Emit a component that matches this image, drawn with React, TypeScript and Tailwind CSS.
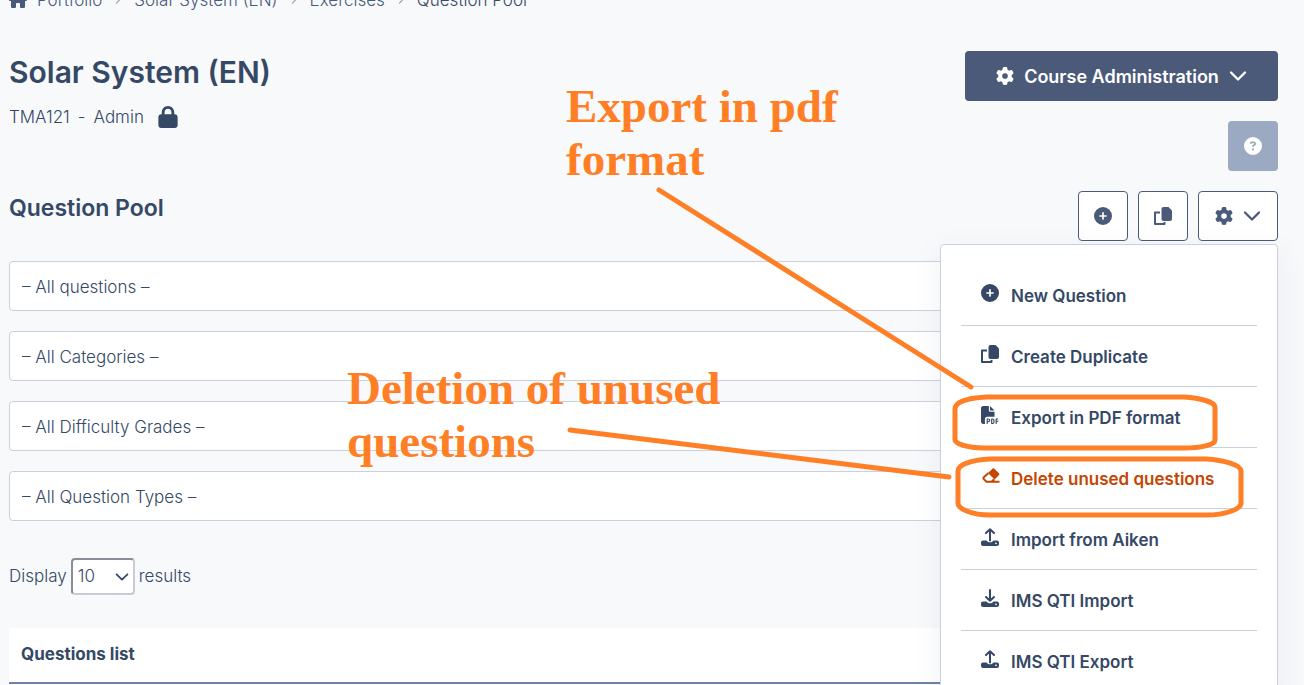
import type { ReactNode } from 'react';
import { FaCircleQuestion, FaCirclePlus, FaFilePdf, FaGear, FaHouse, FaLock } from 'react-icons/fa6';

type MenuItem = {
  label: string;
  icon: ReactNode;
  danger?: boolean;
};

function TrayIcon({ direction }: { direction: 'up' | 'down' }) {
  return (
    <svg viewBox="0 0 18 18" className="size-[18px]" fill="none" aria-hidden="true">
      <path
        fillRule="evenodd"
        fill="currentColor"
        d="M2 12.500H5.500C6.500 13.800 7.700 14.300 9 14.300S11.500 13.800 12.500 12.500H16C17.100 12.500 18 13.400 18 14.500V16C18 17.100 17.100 18 16 18H2C.9 18 0 17.100 0 16V14.500C0 13.400.9 12.500 2 12.500ZM15 14.400a.9.900 0 1 0 0 1.800a.9.900 0 0 0 0-1.800Z"
      />
      <path
        d={direction === 'up' ? 'M9 12.500V1.500M5 5L9 1.200L13 5' : 'M9 1V11.500M5 8L9 11.800L13 8'}
        stroke="currentColor"
        strokeWidth="2"
        strokeLinecap="round"
        strokeLinejoin="round"
      />
    </svg>
  );
}

function CopyIcon() {
  return (
    <svg viewBox="0 0 18 18" className="size-[18px]" fill="none" aria-hidden="true">
      <path d="M9.500 0H14.500L18 3.500V12C18 13.100 17.100 14 16 14H9.500C8.400 14 7.500 13.100 7.500 12V2C7.500.9 8.400 0 9.500 0Z" fill="currentColor" />
      <path d="M6 5.500H1V17H10.500V15" stroke="currentColor" strokeWidth="2" strokeLinejoin="round" />
    </svg>
  );
}

function EraserIcon() {
  return (
    <svg viewBox="0 0 18 18" className="ml-px size-[18px]" fill="none" aria-hidden="true">
      <path d="M6 6L10.500 1.700C11 1.200 11.900 1.200 12.400 1.700L17 6.300C17.500 6.800 17.500 7.600 17 8.100L12.600 12.600Z" fill="currentColor" />
      <path
        d="M6.500 6L1.800 10.300C1.300 10.800 1.300 11.600 1.800 12.100L4.500 14.800H17.500M12.200 12.200L9.500 14.800"
        stroke="currentColor"
        strokeWidth="2"
        strokeLinejoin="round"
      />
    </svg>
  );
}

function ChevronIcon({ className }: { className: string }) {
  return (
    <svg viewBox="0 0 18 18" className={className} fill="none" aria-hidden="true">
      <path d="M2 5.500L9 12.500L16 5.500" stroke="currentColor" strokeWidth="2.300" strokeLinecap="round" strokeLinejoin="round" />
    </svg>
  );
}

const crumbs = ['Portfolio', 'Solar System (EN)', 'Exercises', 'Question Pool'];

const filters = [
  { id: 'questions', label: '– All questions –' },
  { id: 'categories', label: '– All Categories –' },
  { id: 'grades', label: '– All Difficulty Grades –' },
  { id: 'types', label: '– All Question Types –' },
];

const menuItems: MenuItem[] = [
  { label: 'New Question', icon: <FaCirclePlus /> },
  { label: 'Create Duplicate', icon: <CopyIcon /> },
  { label: 'Export in PDF format', icon: <FaFilePdf /> },
  { label: 'Delete unused questions', icon: <EraserIcon />, danger: true },
  { label: 'Import from Aiken', icon: <TrayIcon direction="up" /> },
  { label: 'IMS QTI Import', icon: <TrayIcon direction="down" /> },
  { label: 'IMS QTI Export', icon: <TrayIcon direction="up" /> },
];

function Breadcrumbs() {
  return (
    <nav aria-label="Breadcrumb" className="-mt-3 h-6">
      <ol className="flex items-center leading-6 text-[#4a5a7a]">
        {crumbs.map((crumb, i) => (
          <li key={crumb} className="flex items-center">
            {i > 0 && <ChevronIcon className="mx-3 size-2 -rotate-90 text-[#8a94a8]" />}
            {i < crumbs.length - 1 ? (
              <a href="#" className="flex items-center gap-[10px]">
                {i === 0 && <FaHouse className="size-[18px]" />}
                {crumb}
              </a>
            ) : (
              <span className="text-[#354866]" aria-current="page">{crumb}</span>
            )}
          </li>
        ))}
      </ol>
    </nav>
  );
}

function ToolsMenu() {
  return (
    <ul className="absolute top-full right-0 z-10 mt-[3px] w-[338px] rounded border border-[#cbd1dc] bg-white px-5 pt-5 shadow-[0_8px_30px_rgba(50,70,110,0.08)]">
      {menuItems.map(item => (
        <li key={item.label} className="border-b border-[#cbd1dc]">
          <button
            type="button"
            className={`flex h-[60px] w-full items-center gap-3 px-5 pt-1 text-left text-[17px] font-semibold ${
              item.danger ? 'text-[#c44601]' : 'text-[#354866]'
            }`}
          >
            <span className="-mt-2 w-[18px] text-[18px]">{item.icon}</span>
            {item.label}
          </button>
        </li>
      ))}
    </ul>
  );
}

function Annotations() {
  return (
    <div className="pointer-events-none absolute inset-0 z-20 font-['Liberation_Serif',serif] text-[47px] leading-[53px] font-bold text-[#ff7f27]">
      <p className="absolute top-[80px] left-[566px]">
        Export in pdf
        <br />
        format
      </p>
      <p className="absolute top-[362px] left-[347px]">
        Deletion of unused
        <br />
        questions
      </p>
      <svg
        width="1304"
        height="685"
        viewBox="0 0 1304 685"
        fill="none"
        stroke="#ff7f27"
        strokeWidth="5"
        strokeLinecap="round"
        className="absolute top-0 left-0"
        aria-hidden="true"
      >
        <path d="M659 190L971 387" />
        <path d="M570 430L949 477" />
        <path d="M986 397H1184C1200 398 1215 402 1215 407V440C1215 445 1200 448 1184 448H984C966 448 955 443 955 440V409C955 402 968 398 986 397Z" />
        <path d="M990 459H1206C1224 460 1241 465 1241 471V503C1241 509 1226 515 1206 515H990C972 515 958 509 958 503V471C958 465 970 460 990 459Z" />
      </svg>
    </div>
  );
}

export default function App() {
  return (
    <div className="relative min-h-screen overflow-hidden bg-[#f8f9fb] pr-[26px] pl-[9px] font-[Inter,sans-serif] text-[17px] font-light text-[#354866]">
      <Breadcrumbs />

      <header className="mt-[39px] flex h-[120px] items-start justify-between">
        <div>
          <h1 className="text-[30px] leading-[42px] font-semibold">Solar System (EN)</h1>
          <p className="mt-3 flex items-center gap-[14px] leading-6">
            <span className="flex gap-2">
              <span>TMA121</span>
              <span>-</span>
              <span>Admin</span>
            </span>
            <FaLock className="h-[22px] w-5" />
          </p>
        </div>
        <div className="flex flex-col items-end gap-5">
          <button
            type="button"
            className="flex h-[50px] w-[313px] items-center justify-center gap-[10px] rounded bg-[#4b5a78] text-[18px] font-semibold text-white"
          >
            <FaGear />
            Course Administration
            <ChevronIcon className="size-[18px]" />
          </button>
          <button
            type="button"
            aria-label="Help"
            className="flex size-[50px] items-center justify-center rounded bg-[#9ca9c2] text-white"
          >
            <FaCircleQuestion className="size-[18px]" />
          </button>
        </div>
      </header>

      <div className="mt-5 flex h-[50px] items-start justify-between">
        <h2 className="text-[23px] leading-[34px] font-semibold">Question Pool</h2>
        <div className="relative flex gap-[10px] text-[18px] text-[#4b5a78]">
          <button
            type="button"
            aria-label="New Question"
            className="flex size-[50px] items-center justify-center rounded border border-current bg-white"
          >
            <FaCirclePlus />
          </button>
          <button
            type="button"
            aria-label="Create Duplicate"
            className="flex size-[50px] items-center justify-center rounded border border-current bg-white"
          >
            <CopyIcon />
          </button>
          <button
            type="button"
            aria-label="Tools"
            aria-expanded="true"
            className="flex h-[50px] w-20 items-center justify-center gap-[10px] rounded border border-current bg-white"
          >
            <FaGear />
            <ChevronIcon className="size-[18px]" />
          </button>
          <ToolsMenu />
        </div>
      </div>

      <form className="mt-5 flex flex-col gap-5">
        {filters.map(filter => (
          <select
            key={filter.id}
            aria-label={filter.id}
            className="h-[50px] w-full appearance-none rounded border border-[#cbd1dc] bg-white px-3 pt-[3px]"
          >
            <option>{filter.label}</option>
          </select>
        ))}
      </form>

      <div className="mt-[37px] flex items-center gap-1">
        <label htmlFor="page-size">Display</label>
        <span className="relative flex items-center">
          <select
            id="page-size"
            className="h-[37px] w-16 appearance-none rounded border-2 border-t-[#8c8c98] border-r-[#cbcbd7] border-b-[#cbcbd7] border-l-[#8c8c98] bg-white pl-[5px]"
          >
            <option>10</option>
          </select>
          <ChevronIcon className="pointer-events-none absolute right-[6px] size-[14px]" />
        </span>
        <span>results</span>
      </div>

      <table className="mt-[33px] w-full bg-white">
        <thead>
          <tr className="border-b-2 border-[#6f83a8]">
            <th scope="col" className="h-[55px] px-3 text-left font-bold">
              Questions list
            </th>
          </tr>
        </thead>
      </table>

      <Annotations />
    </div>
  );
}
